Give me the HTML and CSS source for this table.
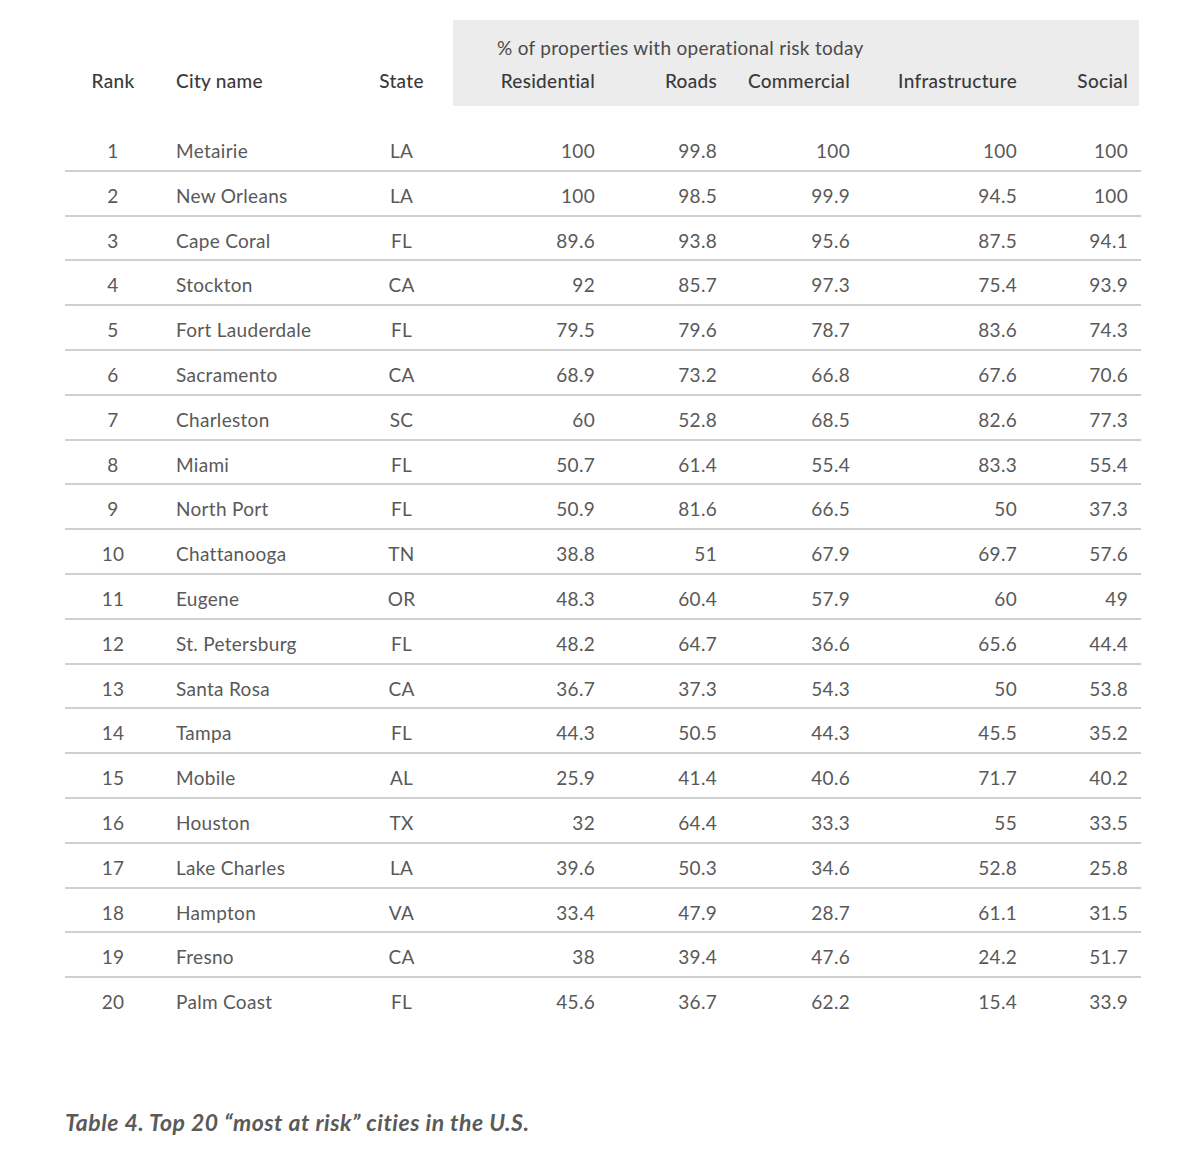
FILE: index.html
```html
<!DOCTYPE html>
<html lang="en">
<head>
<meta charset="utf-8">
<title>Top 20 most at risk cities</title>
<link rel="stylesheet" href="styles.css">
</head>
<body>
<div class="page">
  <table class="risk">
    <colgroup>
      <col class="c-rank"><col class="c-city"><col class="c-state">
      <col class="c-res"><col class="c-roads"><col class="c-com"><col class="c-inf"><col class="c-soc">
    </colgroup>
    <thead>
      <tr class="h1">
        <th rowspan="2" class="center">Rank</th>
        <th rowspan="2" class="city">City name</th>
        <th rowspan="2" class="center">State</th>
        <th colspan="5" class="group">% of properties with operational risk today</th>
      </tr>
      <tr class="h2">
        <th class="num">Residential</th>
        <th class="num">Roads</th>
        <th class="num">Commercial</th>
        <th class="num">Infrastructure</th>
        <th class="num">Social</th>
      </tr>
    </thead>
    <tbody>
      <tr><td class="center">1</td><td class="city">Metairie</td><td class="center">LA</td><td class="num">100</td><td class="num">99.8</td><td class="num">100</td><td class="num">100</td><td class="num">100</td></tr>
      <tr><td class="center">2</td><td class="city">New Orleans</td><td class="center">LA</td><td class="num">100</td><td class="num">98.5</td><td class="num">99.9</td><td class="num">94.5</td><td class="num">100</td></tr>
      <tr><td class="center">3</td><td class="city">Cape Coral</td><td class="center">FL</td><td class="num">89.6</td><td class="num">93.8</td><td class="num">95.6</td><td class="num">87.5</td><td class="num">94.1</td></tr>
      <tr><td class="center">4</td><td class="city">Stockton</td><td class="center">CA</td><td class="num">92</td><td class="num">85.7</td><td class="num">97.3</td><td class="num">75.4</td><td class="num">93.9</td></tr>
      <tr><td class="center">5</td><td class="city">Fort Lauderdale</td><td class="center">FL</td><td class="num">79.5</td><td class="num">79.6</td><td class="num">78.7</td><td class="num">83.6</td><td class="num">74.3</td></tr>
      <tr><td class="center">6</td><td class="city">Sacramento</td><td class="center">CA</td><td class="num">68.9</td><td class="num">73.2</td><td class="num">66.8</td><td class="num">67.6</td><td class="num">70.6</td></tr>
      <tr><td class="center">7</td><td class="city">Charleston</td><td class="center">SC</td><td class="num">60</td><td class="num">52.8</td><td class="num">68.5</td><td class="num">82.6</td><td class="num">77.3</td></tr>
      <tr><td class="center">8</td><td class="city">Miami</td><td class="center">FL</td><td class="num">50.7</td><td class="num">61.4</td><td class="num">55.4</td><td class="num">83.3</td><td class="num">55.4</td></tr>
      <tr><td class="center">9</td><td class="city">North Port</td><td class="center">FL</td><td class="num">50.9</td><td class="num">81.6</td><td class="num">66.5</td><td class="num">50</td><td class="num">37.3</td></tr>
      <tr><td class="center">10</td><td class="city">Chattanooga</td><td class="center">TN</td><td class="num">38.8</td><td class="num">51</td><td class="num">67.9</td><td class="num">69.7</td><td class="num">57.6</td></tr>
      <tr><td class="center">11</td><td class="city">Eugene</td><td class="center">OR</td><td class="num">48.3</td><td class="num">60.4</td><td class="num">57.9</td><td class="num">60</td><td class="num">49</td></tr>
      <tr><td class="center">12</td><td class="city">St. Petersburg</td><td class="center">FL</td><td class="num">48.2</td><td class="num">64.7</td><td class="num">36.6</td><td class="num">65.6</td><td class="num">44.4</td></tr>
      <tr><td class="center">13</td><td class="city">Santa Rosa</td><td class="center">CA</td><td class="num">36.7</td><td class="num">37.3</td><td class="num">54.3</td><td class="num">50</td><td class="num">53.8</td></tr>
      <tr><td class="center">14</td><td class="city">Tampa</td><td class="center">FL</td><td class="num">44.3</td><td class="num">50.5</td><td class="num">44.3</td><td class="num">45.5</td><td class="num">35.2</td></tr>
      <tr><td class="center">15</td><td class="city">Mobile</td><td class="center">AL</td><td class="num">25.9</td><td class="num">41.4</td><td class="num">40.6</td><td class="num">71.7</td><td class="num">40.2</td></tr>
      <tr><td class="center">16</td><td class="city">Houston</td><td class="center">TX</td><td class="num">32</td><td class="num">64.4</td><td class="num">33.3</td><td class="num">55</td><td class="num">33.5</td></tr>
      <tr><td class="center">17</td><td class="city">Lake Charles</td><td class="center">LA</td><td class="num">39.6</td><td class="num">50.3</td><td class="num">34.6</td><td class="num">52.8</td><td class="num">25.8</td></tr>
      <tr><td class="center">18</td><td class="city">Hampton</td><td class="center">VA</td><td class="num">33.4</td><td class="num">47.9</td><td class="num">28.7</td><td class="num">61.1</td><td class="num">31.5</td></tr>
      <tr><td class="center">19</td><td class="city">Fresno</td><td class="center">CA</td><td class="num">38</td><td class="num">39.4</td><td class="num">47.6</td><td class="num">24.2</td><td class="num">51.7</td></tr>
      <tr><td class="center">20</td><td class="city">Palm Coast</td><td class="center">FL</td><td class="num">45.6</td><td class="num">36.7</td><td class="num">62.2</td><td class="num">15.4</td><td class="num">33.9</td></tr>
    </tbody>
  </table>
  <p class="caption">Table 4. Top 20 “most at risk” cities in the U.S.</p>
</div>
</body>
</html>
```
FILE: styles.css
```css
html, body {
  margin: 0;
  padding: 0;
  background: #ffffff;
}

.page {
  padding: 20px 0 0 65px;
  font-family: "Lato", "Open Sans", "Liberation Sans", sans-serif;
}

.risk {
  width: 1076px;
  table-layout: fixed;
  border-collapse: collapse;
  border-spacing: 0;
  font-size: 19px;
  letter-spacing: 0.3px;
  color: #595959;
}

.c-rank { width: 96px; }
.c-city { width: 189px; }
.c-state { width: 103px; }
.c-res { width: 155px; }
.c-roads { width: 122px; }
.c-com { width: 133px; }
.c-inf { width: 167px; }
.c-soc { width: 111px; }

.risk th {
  font-weight: 500;
  color: #3a3a3a;
  line-height: 22px;
  padding: 0;
}

.risk .h1 th {
  vertical-align: bottom;
  padding-bottom: 14px;
}

.risk .h1 th.group {
  background: #ececec;
  text-align: left;
  padding: 17px 0 5px 44px;
  vertical-align: top;
  font-weight: 400;
  color: #4a4a4a;
  box-shadow: inset -2px 0 0 #ffffff;
}

.risk .h2 th {
  background: #ececec;
  padding: 6px 13px 14px 0;
}

.risk .h2 th:last-child {
  box-shadow: inset -2px 0 0 #ffffff;
}

.risk td {
  line-height: 22px;
  padding: 13px 0 7.8px 0;
  border-bottom: 2px solid #cfcfcf;
  white-space: nowrap;
}

.risk tbody tr:first-child td {
  padding-top: 34px;
}

.risk tbody tr:last-child td {
  border-bottom: none;
}

.center { text-align: center; }

.risk .city {
  text-align: left;
  padding-left: 15px;
}

.risk td.num, .risk th.num {
  text-align: right;
  padding-right: 13px;
}

.caption {
  margin: 87px 0 0 0;
  font-size: 23px;
  font-style: italic;
  font-weight: 700;
  letter-spacing: 0.5px;
  color: #5a5a5a;
}
```
